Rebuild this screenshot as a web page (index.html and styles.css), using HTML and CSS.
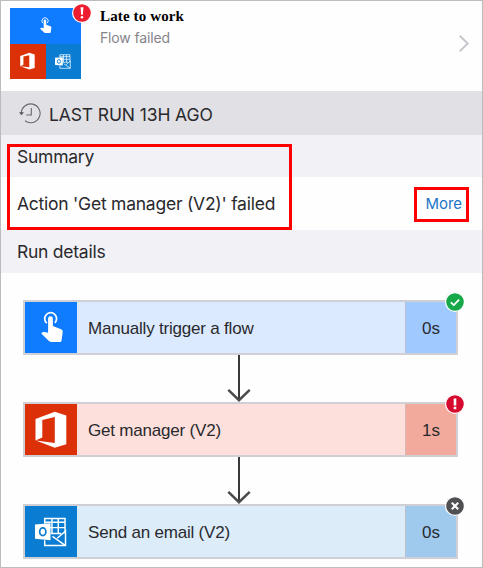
FILE: index.html
```html
<!DOCTYPE html>
<html lang="en">
<head>
<meta charset="utf-8">
<title>Late to work</title>
<link rel="stylesheet" href="styles.css">
</head>
<body>
<svg class="defs" aria-hidden="true">
  <symbol id="tap" viewBox="0 0 24 34">
    <path d="M6.1 12.5A6.2 6.2 0 1 1 14.5 12.1" fill="none" stroke="currentColor" stroke-width="1.8"/>
    <path d="M7.4 22.5V7.7a2.5 2.5 0 0 1 5 0V15.5l8.5 3.2q2 .8 1.8 2.7l-1.3 9.3q-.2 1.3-1.5 1.3H10.2q-1.1 0-1.9-.8L.8 23.8q-.6-.6 0-1.3 1.3-1.1 2.9-.8z" fill="currentColor"/>
  </symbol>
  <symbol id="office" viewBox="0 0 32 37">
    <path fill="currentColor" fill-rule="evenodd" d="M.5 8 19.8.8 31.3 4.4V33.3L19.8 36.7.8 29.5 19.8 32V6L7.3 9V26.6L.5 29.5z"/>
  </symbol>
  <symbol id="outlook" viewBox="0 0 33 31">
    <path d="M10 7V1.5H31V17M10 24v5.5H31.5V14.5L23 22M10 5.5H31M10 11H31M16 17H27M17.5 2V17M24 2V17M18 20 31.5 29.5" fill="none" stroke="currentColor" stroke-width="1.5"/>
    <path d="M0 7.7 16 6.5V24L0 22.5z" fill="currentColor"/>
    <ellipse class="letter-ring" cx="8" cy="15.3" rx="3.2" ry="4"/>
  </symbol>
</svg>
<main class="screen">
  <header class="header">
    <div class="logo">
      <div class="logo-top blue"><svg class="tap-sm"><use href="#tap"/></svg></div>
      <div class="logo-cell red"><svg class="office-sm"><use href="#office"/></svg></div>
      <div class="logo-cell azure"><svg class="outlook-sm"><use href="#outlook"/></svg></div>
      <svg class="badge-lg" viewBox="0 0 20 20"><circle cx="10" cy="10" r="9.4" fill="#ed1c2e" stroke="#fff" stroke-width="1.2"/><path d="M8.6 4.2h2.8l-.5 7.6H9.1z" fill="#fff"/><circle cx="10" cy="14.2" r="1.3" fill="#fff"/></svg>
    </div>
    <div class="heading">
      <h1>Late to work</h1>
      <p>Flow failed</p>
    </div>
    <svg class="chevron" viewBox="0 0 10 17"><path d="M.8.8 8.7 8.5.8 16.2" fill="none" stroke="#c5c5ca" stroke-width="1.9"/></svg>
  </header>
  <div class="last-run">
    <svg class="history" viewBox="0 0 22 21"><path d="M2.3 10.3A9.4 9.4 0 1 1 6 17.8M12.3 5v7H7.3" fill="none" stroke="#68686c" stroke-width="1.1"/><path d="M0 9.2h4.9L2.5 12.3z" fill="#55555a"/></svg>
    <span>LAST RUN 13H AGO</span>
  </div>
  <section class="summary">
    <h2 class="section-title">Summary</h2>
    <div class="message"><span>Action 'Get manager (V2)' failed</span><a class="more">More</a></div>
    <div class="mark mark-summary"></div>
    <div class="mark mark-more"></div>
  </section>
  <h2 class="section-title details">Run details</h2>
  <section class="steps">
    <div class="step step-blue">
      <div class="step-icon blue"><svg class="tap-lg"><use href="#tap"/></svg></div>
      <div class="step-name">Manually trigger a flow</div>
      <div class="step-time">0s</div>
      <svg class="badge" viewBox="0 0 20 20"><circle cx="10" cy="10" r="9.4" fill="#16a849" stroke="#fff" stroke-width="1.2"/><path d="m5.8 10.3 3 2.8 5.3-5.4" fill="none" stroke="#fff" stroke-width="1.8"/></svg>
    </div>
    <svg class="arrow" viewBox="0 0 24 47"><path d="M12 0V46" stroke="#39393b" stroke-width="2"/><path d="M1.3 34.8 12 45.2 22.7 34.8" fill="none" stroke="#4b4b4d" stroke-width="2.5"/></svg>
    <div class="step step-red">
      <div class="step-icon red"><svg class="office-lg"><use href="#office"/></svg></div>
      <div class="step-name">Get manager (V2)</div>
      <div class="step-time">1s</div>
      <svg class="badge" viewBox="0 0 20 20"><circle cx="10" cy="10" r="9.4" fill="#d50c2f" stroke="#fff" stroke-width="1.2"/><path d="M8.7 4.5h2.6v7H8.7zM8.7 12.8h2.6v2.4H8.7z" fill="#fff"/></svg>
    </div>
    <svg class="arrow" viewBox="0 0 24 47"><path d="M12 0V46" stroke="#39393b" stroke-width="2"/><path d="M1.3 34.8 12 45.2 22.7 34.8" fill="none" stroke="#4b4b4d" stroke-width="2.5"/></svg>
    <div class="step step-azure">
      <div class="step-icon azure"><svg class="outlook-lg"><use href="#outlook"/></svg></div>
      <div class="step-name">Send an email (V2)</div>
      <div class="step-time">0s</div>
      <svg class="badge" viewBox="0 0 20 20"><circle cx="10" cy="10" r="9.4" fill="#505054" stroke="#fff" stroke-width="1.2"/><path d="m6.8 6.8 6.4 6.4M13.2 6.8l-6.4 6.4" stroke="#fff" stroke-width="2"/></svg>
    </div>
  </section>
</main>
</body>
</html>
```
FILE: styles.css
```css
* { box-sizing: border-box; }
body { margin: 0; background: #fff; color: #29292d; }
h1, h2, p { margin: 0; font-weight: 400; }
svg { display: block; }
.defs { display: none; }
.blue { background: #0f7bff; color: #fff; }
.red { background: #dc3008; color: #fff; }
.azure { background: #0a7dd3; color: #fff; }

.screen {
  width: 483px;
  height: 568px;
  border: 1px solid #bcbcbe;
  background: #fefefe;
  overflow: hidden;
  font-family: Inter, "Liberation Sans", sans-serif;
}

.header { height: 90px; display: flex; padding: 7px 13px 0 9px; }
.logo {
  position: relative;
  width: 71px;
  height: 71px;
  display: grid;
  grid-template: 35.5px 35.5px / 35.5px 35.5px;
}
.logo-top { grid-column: 1 / 3; }
.logo-top, .logo-cell, .step-icon { display: flex; align-items: center; justify-content: center; }
.tap-sm { width: 12px; height: 17px; }
.office-sm { width: 15px; height: 18px; }
.outlook-sm { width: 16px; height: 15px; }
.badge-lg { position: absolute; left: 62px; top: -5px; width: 20px; height: 20px; }
.heading { padding-left: 19px; flex: 1; }
.heading h1 {
  font: 700 15px/17px "Liberation Serif", serif;
  letter-spacing: .13px;
  color: #000;
  white-space: nowrap;
}
.heading p { font-size: 14px; line-height: 18px; margin-top: 4px; letter-spacing: -.15px; color: #85858a; }
.chevron { width: 10px; height: 17px; margin-top: 27px; }

.last-run {
  height: 44px;
  background: #e1e0e4;
  display: flex;
  align-items: center;
  gap: 8px;
  padding: 2px 0 0 18px;
  font-size: 17.5px;
  letter-spacing: -.12px;
}
.history { width: 22px; height: 21px; margin-top: -2px; }

.summary { position: relative; }
.section-title {
  height: 42px;
  background: #f2f1f5;
  padding-left: 16px;
  font-size: 17.5px;
  line-height: 43px;
  letter-spacing: -.25px;
}
.details { height: 43px; }
.message {
  height: 53px;
  display: flex;
  align-items: center;
  justify-content: space-between;
  padding: 0 20px 0 16px;
  font-size: 17.5px;
  letter-spacing: -.24px;
}
.more { font-size: 15px; letter-spacing: -.05px; color: #1b75c9; }
.mark { position: absolute; border: 3px solid #f00; }
.mark-summary { left: 6px; top: 9px; width: 285px; height: 86px; }
.mark-more { left: 413px; top: 52px; width: 55px; height: 35px; }

.steps { padding: 27px 24px 0 22px; font-family: "Liberation Sans", sans-serif; }
.step {
  position: relative;
  height: 55px;
  display: grid;
  grid-template-columns: 52px 1fr 51px;
  border: 2px solid #d0cfd5;
  font-size: 17px;
}
.step-name { display: flex; align-items: center; padding: 2px 0 0 11px; letter-spacing: -.2px; }
.step-time { display: flex; align-items: center; justify-content: center; padding-top: 2px; border-left: 1px solid #b9c1cf; }
.step-blue { background: #dceaff; }
.step-blue .step-time { background: #9fc9ff; }
.step-red { background: #fde0dc; }
.step-red .step-time { background: #f2aa9c; border-left-color: #d9b5b3; }
.step-azure { background: #dcecf9; }
.step-azure .step-time { background: #9fcaee; }
.tap-lg { width: 23px; height: 33px; margin-left: 2px; }
.office-lg { width: 32px; height: 37px; }
.outlook-lg { width: 32px; height: 30px; margin-right: 1px; }
.letter-ring { fill: none; stroke: #0a7dd3; stroke-width: 1.8; }
.badge { position: absolute; right: -9px; top: -10px; width: 20px; height: 20px; }
.arrow { width: 24px; height: 47px; margin-left: 204px; }
```
